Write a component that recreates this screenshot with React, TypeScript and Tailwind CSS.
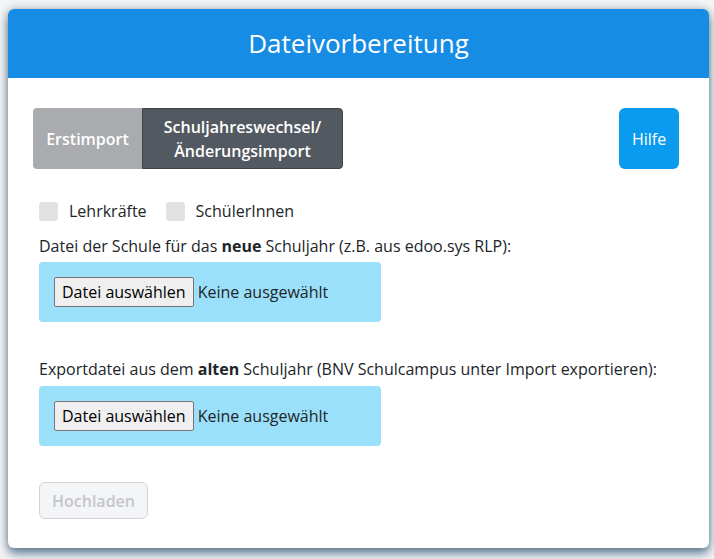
import { useState } from "react";

function FilePicker() {
  return (
    <div className="flex h-[60px] w-[342px] items-center rounded bg-[#9be0fa] pl-[15px]">
      <button className="h-[30px] rounded-[2px] border border-[#767676] bg-[#efefef] px-[7px] text-[16px] text-black">
        Datei auswählen
      </button>
      <span className="ml-[4px] text-[16px] text-[#212529]">Keine ausgewählt</span>
    </div>
  );
}

function Check({ label, checked, onChange }: { label: string; checked: boolean; onChange: () => void }) {
  return (
    <label className="flex cursor-pointer items-center" onClick={onChange}>
      <span className={"h-[19px] w-[19px] rounded-[3px] " + (checked ? "bg-[#1a8be3]" : "bg-[#e1e2e4]")} />
      <span className="ml-[11px] text-[16px] text-[#212529]">{label}</span>
    </label>
  );
}

export default function App() {
  const [mode, setMode] = useState<"first" | "change">("change");
  const [teachers, setTeachers] = useState(false);
  const [students, setStudents] = useState(false);

  return (
    <main className="min-h-[559px] bg-[#f3f4f5] px-[8px] pt-[9px] font-['Open_Sans',sans-serif]">
      <div className="w-[701px] overflow-hidden rounded-[6px] bg-white shadow-[0_0_8px_rgba(0,0,0,0.25),0_6px_10px_rgba(70,110,140,0.75)]">
        <div className="flex h-[69px] items-center justify-center bg-[#168ce4]">
          <h1 className="text-[26px] font-normal text-white">Dateivorbereitung</h1>
        </div>

        <div className="pl-[25px] pr-[30px] pt-[30px] pb-[29px]">
          <div className="flex items-start justify-between">
            <div className="flex">
              <button
                onClick={() => setMode("first")}
                className={
                  "h-[61px] w-[109px] rounded-l-[4px] text-[16px] font-semibold text-white " +
                  (mode === "first" ? "bg-[#535961]" : "bg-[#a9abae]")
                }
              >
                Erstimport
              </button>
              <button
                onClick={() => setMode("change")}
                className={
                  "h-[61px] w-[201px] rounded-r-[4px] border border-[#3f444a] text-[16px] font-semibold leading-[24px] text-white " +
                  (mode === "change" ? "bg-[#535961]" : "bg-[#a9abae]")
                }
              >
                Schuljahreswechsel/
                <br />
                Änderungsimport
              </button>
            </div>
            <button className="h-[61px] w-[60px] rounded-[6px] bg-[#0a9bef] text-[16px] text-white">Hilfe</button>
          </div>

          <div className="ml-[6px] mt-[30px] flex gap-[19px]">
            <Check label="Lehrkräfte" checked={teachers} onChange={() => setTeachers(!teachers)} />
            <Check label="SchülerInnen" checked={students} onChange={() => setStudents(!students)} />
          </div>

          <div className="ml-[6px]">
            <p className="mt-[11px] text-[16px] leading-[24px] text-[#212529]">
              Datei der Schule für das <b>neue</b> Schuljahr (z.B. aus edoo.sys RLP):
            </p>
            <div className="mt-[4px]">
              <FilePicker />
            </div>

            <p className="mt-[35px] text-[16px] leading-[24px] text-[#212529]">
              Exportdatei aus dem <b>alten</b> Schuljahr (BNV Schulcampus unter Import exportieren):
            </p>
            <div className="mt-[5px]">
              <FilePicker />
            </div>

            <button
              disabled
              className="mt-[36px] h-[37px] w-[109px] rounded-[6px] border border-[#d2d3d6] bg-[#f4f5f7] text-[16px] font-semibold text-[#c4c6ca]"
            >
              Hochladen
            </button>
          </div>
        </div>
      </div>
    </main>
  );
}
